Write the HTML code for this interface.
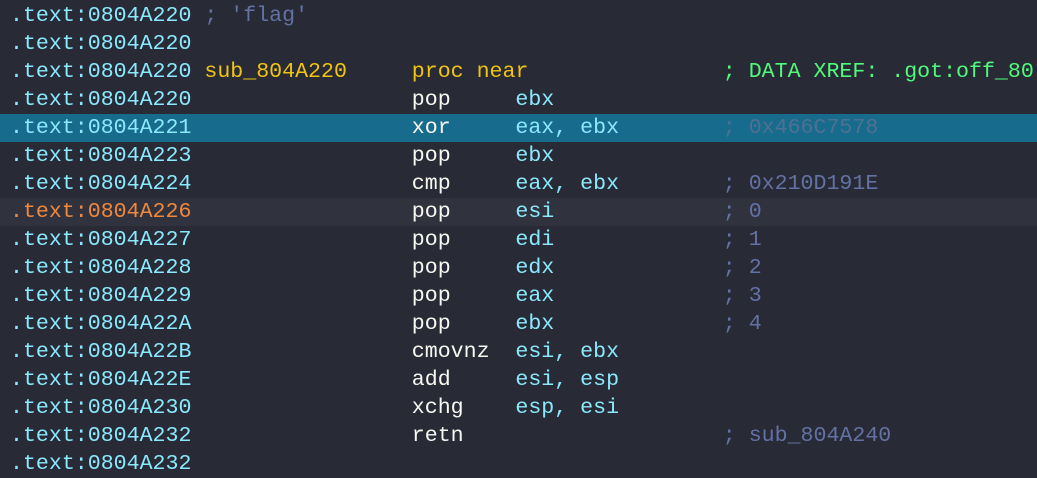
<!DOCTYPE html>
<html><head><meta charset="utf-8"><style>
html,body{margin:0;padding:0;background:#282a36;width:1037px;height:478px;overflow:hidden}
.l{position:absolute;left:0;width:1037px;height:28px;line-height:28px;font-family:"Liberation Mono",monospace;font-size:21.6px;white-space:pre;color:#8be9fd}
.l span.t{position:absolute;top:0}
.a{color:#8be9fd}.w{color:#f8f8f2}.c{color:#6272a4}.y{color:#f1c40f}.g{color:#50fa7b}.o{color:#f0883e}
.hl{background:#176b8d}.hl .c{color:#4f7191}
.cur{background:#30323e}
</style></head><body>
<div id="r"></div>
<script>
var rows=[
["a",".text:0804A220",null,null,null,["c","; 'flag'",15]],
["a",".text:0804A220"],
["a",".text:0804A220",["y","sub_804A220"],["y","proc near"],null,["g","; DATA XREF: .got:off_80",55]],
["a",".text:0804A220",null,["w","pop"],"ebx"],
["a",".text:0804A221",null,["w","xor"],"eax, ebx",["c","; 0x466C7578",55],"hl"],
["a",".text:0804A223",null,["w","pop"],"ebx"],
["a",".text:0804A224",null,["w","cmp"],"eax, ebx",["c","; 0x210D191E",55]],
["o",".text:0804A226",null,["w","pop"],"esi",["c","; 0",55],"cur"],
["a",".text:0804A227",null,["w","pop"],"edi",["c","; 1",55]],
["a",".text:0804A228",null,["w","pop"],"edx",["c","; 2",55]],
["a",".text:0804A229",null,["w","pop"],"eax",["c","; 3",55]],
["a",".text:0804A22A",null,["w","pop"],"ebx",["c","; 4",55]],
["a",".text:0804A22B",null,["w","cmovnz"],"esi, ebx"],
["a",".text:0804A22E",null,["w","add"],"esi, esp"],
["a",".text:0804A230",null,["w","xchg"],"esp, esi"],
["a",".text:0804A232",null,["w","retn"],null,["c","; sub_804A240",55]],
["a",".text:0804A232"]
];
var cw=12.96,x0=10,h="";
function s(cls,txt,col){return '<span class="t '+cls+'" style="left:'+(x0+col*cw).toFixed(1)+'px">'+txt+'</span>';}
rows.forEach(function(r,i){
 var inner=s(r[0],r[1],0);
 if(r[2])inner+=s(r[2][0],r[2][1],15);
 if(r[3])inner+=s(r[3][0],r[3][1],31);
 if(r[4])inner+=s("a",r[4],39);
 if(r[5])inner+=s(r[5][0],r[5][1],r[5][2]);
 h+='<div class="l '+(r[6]||"")+'" style="top:'+(2+28*i)+'px">'+inner+'</div>';
});
document.getElementById("r").innerHTML=h;
</script>
</body></html>
